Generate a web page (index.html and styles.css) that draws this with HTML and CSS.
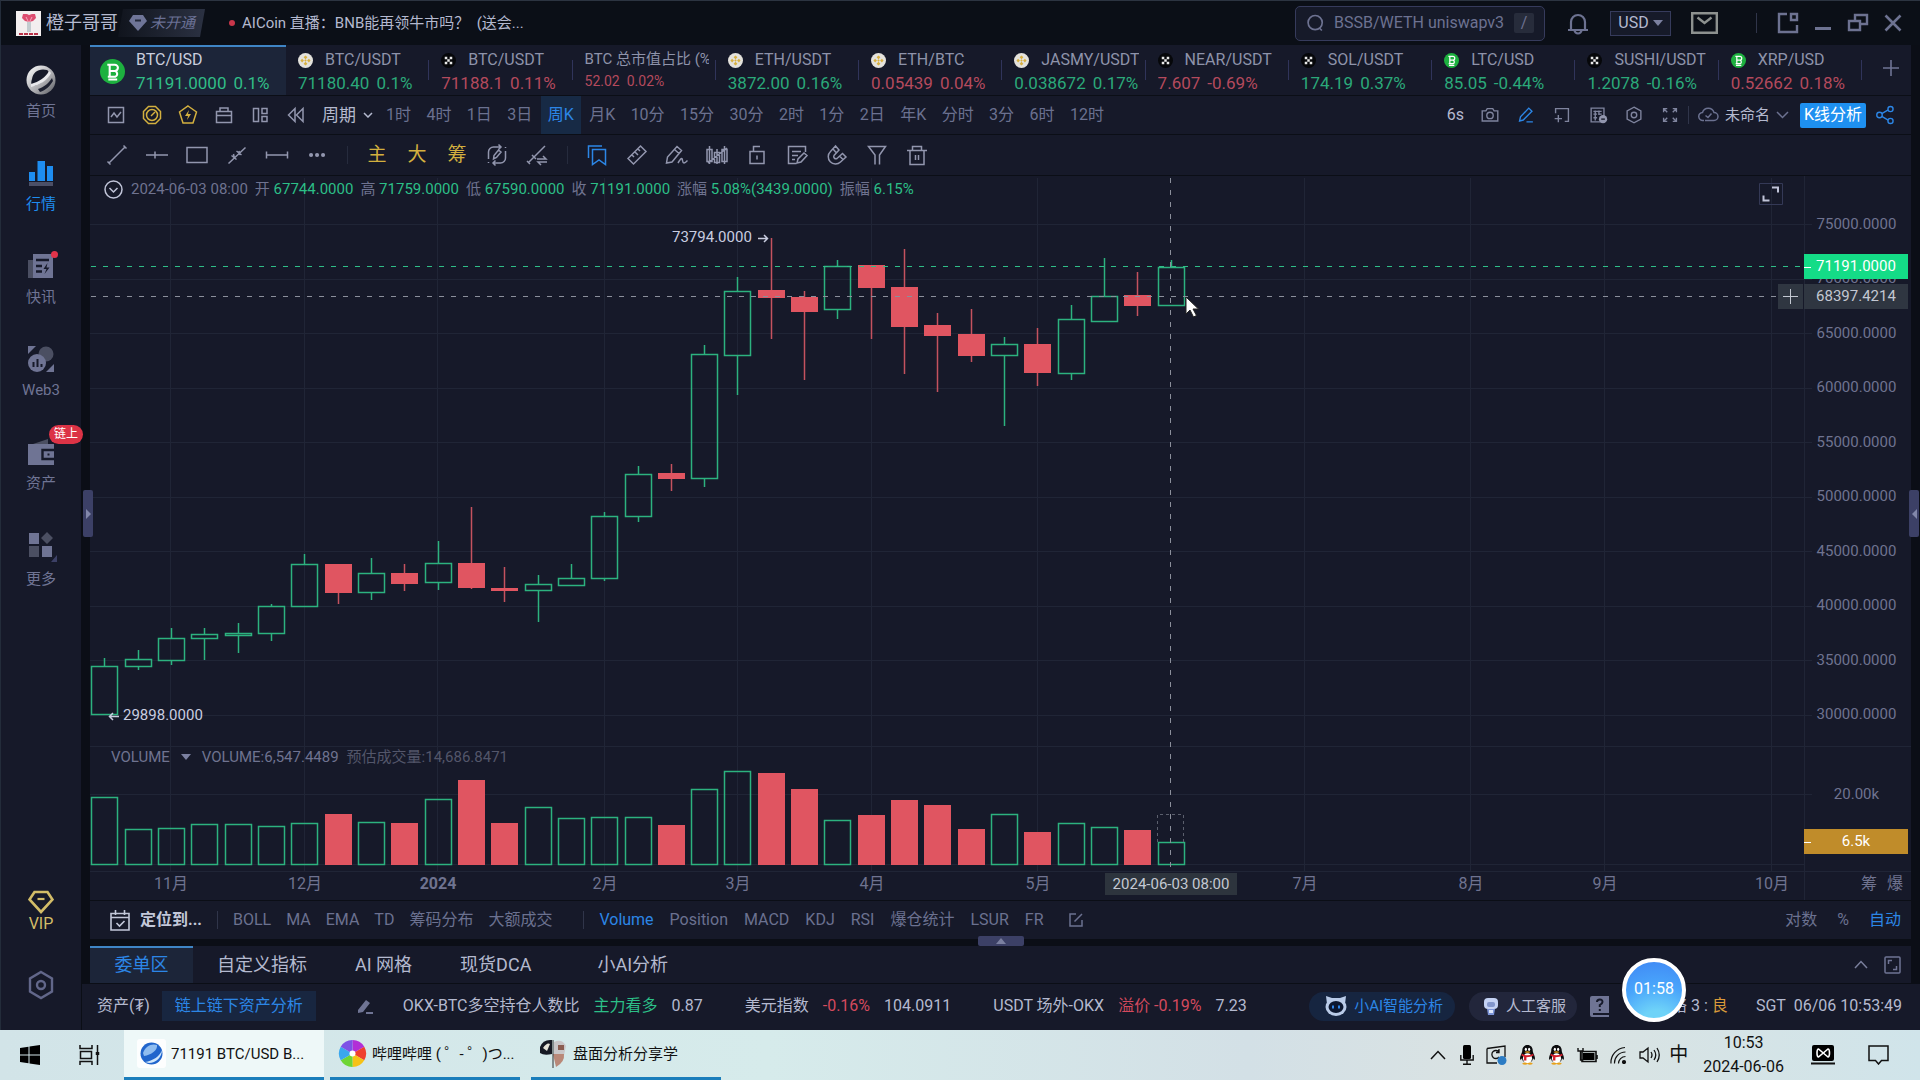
FILE: index.html
```html
<!DOCTYPE html>
<html lang="zh-CN">
<head>
<meta charset="utf-8">
<title>71191 BTC/USD</title>
<link rel="stylesheet" href="styles.css">
</head>
<body>
<svg class="defs" aria-hidden="true">
  <symbol id="c-bnb" viewBox="0 0 16 16"><circle cx="8" cy="8" r="8" fill="#e4e2dc"/><path d="M8 2.6 10 4.6 8 6.6 6 4.6zM8 9.4l2 2-2 2-2-2zM4.4 6 6.3 8 4.4 10 2.6 8zM11.6 6l1.800 2-1.800 2-1.900-2zM8 6.700 9.300 8 8 9.300 6.700 8z" fill="#d8b041"/></symbol>
  <symbol id="c-okx" viewBox="0 0 16 16"><circle cx="8" cy="8" r="8" fill="#06070a"/><path d="M4 4h2.700v2.700H4zM9.300 4H12v2.700H9.300zM6.700 6.700h2.600v2.600H6.700zM4 9.300h2.700V12H4zM9.300 9.300H12V12H9.300z" fill="#e8e8e8"/></symbol>
  <symbol id="c-btf" viewBox="0 0 24 24"><circle cx="12" cy="12" r="12" fill="#1db13f"/><path d="M7 5.500h7.200a3 3 0 0 1 0 6H9.300m0-6v11M9.300 11.500h5.300a3 3 0 0 1 0 5.600H7.500M8 19.600h8.500" fill="none" stroke="#fff" stroke-width="2"/></symbol>
  <symbol id="c-qq" viewBox="0 0 18 22"><path d="M9 0c3.600 0 5.800 2.600 5.800 6.400 0 1.200.4 2 1.200 3.800 1.200 2.600 1.600 5.600.8 5.900-.5.200-1.200-.8-1.700-1.600-.2 1.600-.8 2.800-1.700 3.600H4.600c-.9-.8-1.500-2-1.700-3.600-.5.800-1.200 1.800-1.700 1.600-.8-.3-.4-3.300.8-5.900C2.800 8.400 3.200 7.600 3.200 6.400 3.200 2.600 5.400 0 9 0z" fill="#0b0b0d"/><ellipse cx="9" cy="14.500" rx="5" ry="5.500" fill="#fff"/><ellipse cx="7.200" cy="4.800" rx="1.200" ry="1.700" fill="#fff"/><ellipse cx="10.800" cy="4.800" rx="1.200" ry="1.700" fill="#fff"/><path d="M5.500 7.600q3.500-1.300 7 0-3.500 2-7 0zM3 20.500q3-2.500 6-.3 3-2.200 6 .3-3 2-6 .5-3 1.500-6-.5z" fill="#e8a21c"/><path d="M2.800 9.500q6.200 3.600 12.400 0l.6 2q-3.500 2-8 2v3.500H5.200V13l-3-1.500z" fill="#d5202c"/></symbol>
</svg>

<div class="window">
  <header class="titlebar">
    <div class="user">
      <svg class="avatar" viewBox="0 0 25 25"><rect width="25" height="25" fill="#f3efef"/><path d="M7 3h4l2 1 3-1h3l1 4-3 3-4 1-4-1-3-3z" fill="#dd4c6f"/><path d="M10 6l3 6 3-6" stroke="#f3a9bb" fill="none"/><path d="M11 11h4v10h-4z" fill="#c3cbcf"/><path d="M3 23h19" stroke="#ba3349" stroke-width="2" stroke-dasharray="4 1"/></svg>
      <span class="user-name">橙子哥哥</span>
      <a class="member" href="#"><svg width="18" height="16" viewBox="0 0 18 16"><path d="M4 0h10l4 6-9 10L0 6z" fill="#6f7598"/><path d="M6 5.500h6" stroke="#23293b" stroke-width="2"/></svg><i>未开通</i></a>
    </div>
    <a class="notice" href="#"><span class="dot"></span>AICoin 直播：BNB能再领牛市吗？&nbsp; (送会...</a>
    <div class="title-tools">
      <label class="search"><svg class="i" viewBox="0 0 24 24"><circle cx="11" cy="11.500" r="8.500" stroke-width="2"/><path d="M16 18l3 3" stroke-width="2"/></svg><input type="text" aria-label="搜索" placeholder="BSSB/WETH uniswapv3"><kbd>/</kbd></label>
      <button class="tb bell" aria-label="通知"><svg class="i" viewBox="0 0 24 24"><path d="M2 19h20M5 18v-7a7 7 0 0 1 14 0v7M8.500 19a3.500 3.500 0 0 0 7 0" stroke-width="2.200"/></svg></button>
      <button class="currency">USD<span class="tri"></span></button>
      <button class="tb mail" aria-label="邮件"><svg width="27" height="22" viewBox="0 0 27 22" fill="none" stroke="currentColor" stroke-width="2.400"><path d="M1.200 1.200h24.600v19.600H1.200zM6.500 5.500l7 5.500 7-5.500"/></svg></button>
      <span class="bar"></span>
      <button class="tb" aria-label="布局"><svg class="i" viewBox="0 0 24 24"><path d="M11 3H3v18h18v-7M15 3h6v6h-6z" stroke-width="2.400"/></svg></button>
      <button class="tb" aria-label="最小化"><svg class="i" viewBox="0 0 24 24"><path d="M4 17.500h16" stroke-width="3"/></svg></button>
      <button class="tb" aria-label="还原"><svg class="i" viewBox="0 0 24 24"><path d="M3 10h11v9H3zM9 9V4h12v9h-6" stroke-width="2.400"/></svg></button>
      <button class="tb" aria-label="关闭"><svg class="i" viewBox="0 0 24 24"><path d="M4.500 4.500l15 15M19.500 4.500l-15 15" stroke-width="2.600"/></svg></button>
    </div>
  </header>

  <div class="body">
    <nav class="side">
      <a href="#"><svg width="30" height="30" viewBox="0 0 30 30"><defs><linearGradient id="mg" x1="0" y1="0" x2="1" y2="1"><stop offset="0" stop-color="#fff"/><stop offset=".6" stop-color="#a9a9ad"/><stop offset="1" stop-color="#55575d"/></linearGradient></defs><circle cx="15" cy="15" r="14.500" fill="url(#mg)"/><path d="M6 14C7 7 13 3 21 5c3 2 3 6-2 10-5 4-11 7-13 5-1-1-1-3 0-6z" fill="#161929"/><path d="M5 19c8-2 15-7 18-13l2 2C22 15 14 20 5 22z" fill="#e9e9ec"/><path d="M12 24c6-2 11-6 14-11l1 3c-3 5-7 9-13 11z" fill="#1d2030"/></svg><span>首页</span></a>
      <a class="on" href="#"><svg width="26" height="26" viewBox="0 0 26 26"><path d="M1 12h6v9H1zM9.500 1H17v20H9.500zM19 6h6v15h-6z" fill="#1e8df0"/><path d="M1 22h24v4H1z" fill="#4b4f66"/></svg><span>行情</span></a>
      <a href="#"><svg width="28" height="26" viewBox="0 0 28 26"><path d="M1 7h6v18H1z" fill="#4b4f62"/><path d="M6 1h20v24H6z" fill="#6f7494"/><path d="M9 7h13M9 13h6M9 18.500h6" stroke="#161929" stroke-width="2.400"/><path d="M20.500 10l-4 6h3l-2 5 5-6.500h-3z" fill="#161929"/></svg><em class="reddot"></em><span>快讯</span></a>
      <a href="#"><svg width="26" height="26" viewBox="0 0 26 26"><circle cx="18" cy="8" r="7.500" fill="#4b4f62"/><path d="M0 0h8L0 8zM26 26h-8l8-8z" fill="#6f7494"/><circle cx="9" cy="17" r="9" fill="#6f7494"/><path d="M5.500 21v-5M9.500 21v-8M13.500 21v-3" stroke="#161929" stroke-width="2"/></svg><span>Web3</span></a>
      <a href="#"><svg width="26" height="26" viewBox="0 0 26 26"><path d="M2 6l18-6v6z" fill="#4b4f62"/><path d="M0 5h26v21H0z" fill="#6f7494"/><path d="M26 11H14.500v9H26" fill="none" stroke="#161929" stroke-width="2.400"/><path d="M19.500 14.500h2v2h-2z" fill="#161929"/></svg><em class="badge">链上</em><span>资产</span></a>
      <a class="more" href="#"><svg width="32" height="30" viewBox="0 0 32 30"><path d="M4 1h10v11H4zM17 14h10v11H17z" fill="#6f7494"/><path d="M22 0l6 6-6 6-6-6zM4 14h10v11H4z" fill="#4b4f62"/><path d="M32 23v7h-6z" fill="#3c4066"/></svg><span>更多</span></a>
      <div class="side-foot">
        <a class="vip" href="#"><svg width="26" height="24" viewBox="0 0 26 24"><path d="M6.500 2h13l5 7.500L13 22 1.500 9.500z" fill="none" stroke="#d3bd68" stroke-width="2.600"/><path d="M9.500 9h7" stroke="#d3bd68" stroke-width="2.200"/></svg><span>VIP</span></a>
        <a href="#" aria-label="设置"><svg width="26" height="30" viewBox="0 0 26 30" fill="none" stroke="#62678a" stroke-width="2.400"><path d="M13 2l11 6.500v13L13 28 2 21.500v-13z"/><circle cx="13" cy="15" r="4"/></svg></a>
      </div>
    </nav>

    <main class="main">
      <nav class="tickers">
        <a class="tick active" href="#"><svg class="big"><use href="#c-btf"/></svg><span><b>BTC/USD</b><strong class="up"><span>71191.0000</span><span>0.1%</span></strong></span></a>
        <a class="tick" href="#"><b><svg><use href="#c-bnb"/></svg>BTC/USDT</b><strong class="up"><span>71180.40</span><span>0.1%</span></strong></a>
        <a class="tick" href="#"><b><svg><use href="#c-okx"/></svg>BTC/USDT</b><strong class="dn"><span>71188.1</span><span>0.11%</span></strong></a>
        <a class="tick small" href="#"><b>BTC 总市值占比 (%)</b><strong class="dn"><span>52.02</span><span>0.02%</span></strong></a>
        <a class="tick" href="#"><b><svg><use href="#c-bnb"/></svg>ETH/USDT</b><strong class="up"><span>3872.00</span><span>0.16%</span></strong></a>
        <a class="tick" href="#"><b><svg><use href="#c-bnb"/></svg>ETH/BTC</b><strong class="dn"><span>0.05439</span><span>0.04%</span></strong></a>
        <a class="tick" href="#"><b><svg><use href="#c-bnb"/></svg>JASMY/USDT</b><strong class="up"><span>0.038672</span><span>0.17%</span></strong></a>
        <a class="tick" href="#"><b><svg><use href="#c-okx"/></svg>NEAR/USDT</b><strong class="dn"><span>7.607</span><span>-0.69%</span></strong></a>
        <a class="tick" href="#"><b><svg><use href="#c-okx"/></svg>SOL/USDT</b><strong class="up"><span>174.19</span><span>0.37%</span></strong></a>
        <a class="tick" href="#"><b><svg><use href="#c-btf"/></svg>LTC/USD</b><strong class="up"><span>85.05</span><span>-0.44%</span></strong></a>
        <a class="tick" href="#"><b><svg><use href="#c-okx"/></svg>SUSHI/USDT</b><strong class="up"><span>1.2078</span><span>-0.16%</span></strong></a>
        <a class="tick" href="#"><b><svg><use href="#c-btf"/></svg>XRP/USD</b><strong class="dn"><span>0.52662</span><span>0.18%</span></strong></a>
        <button class="add" aria-label="添加"><svg width="16" height="16" viewBox="0 0 16 16"><path d="M8 0v16M0 8h16" stroke="#6f7494" stroke-width="1.600"/></svg></button>
      </nav>

      <div class="toolbar periods">
        <div class="tools-a">
          <button aria-label="指标"><svg class="i" viewBox="0 0 24 24"><path d="M4.500 4.500h15v15h-15zM7 14l3-4 3 4 4-5"/></svg></button>
          <button class="gold" aria-label="仪表"><svg class="i" viewBox="0 0 24 24"><path d="M8.500 3.500h7l5 5v7l-5 5h-7l-5-5v-7z"/><circle cx="12" cy="12" r="5.500"/><path d="M11 13l4-4"/></svg></button>
          <button class="gold" aria-label="闪电"><svg class="i" viewBox="0 0 24 24"><path d="M12 3l8.500 6-3.500 11H7L3.500 9z"/><path d="M13 7l-4 6h3l-1 4 4-6h-3z" fill="currentColor" stroke="none"/></svg></button>
          <button aria-label="日历"><svg class="i" viewBox="0 0 24 24"><path d="M4.500 8.500h15v11h-15zM4.500 12.500h15M8 8V5h8v3"/></svg></button>
          <button aria-label="布局"><svg class="i" viewBox="0 0 24 24"><path d="M5.500 5.500h5v13h-5zM14 5.500h5v5h-5zM14 13.500h5v5h-5z"/></svg></button>
          <button aria-label="回放"><svg class="i" viewBox="0 0 24 24"><path d="M11 5.500v13L4.500 12zM19 5.500v13L12.500 12z"/></svg></button>
        </div>
        <button class="cycle">周期<svg width="10" height="6" viewBox="0 0 10 6" fill="none" stroke="currentColor" stroke-width="1.500"><path d="M1 1l4 4 4-4"/></svg></button>
        <div class="frames">
          <button>1时</button><button>4时</button><button>1日</button><button>3日</button><button class="on">周K</button><button>月K</button><button>10分</button><button>15分</button><button>30分</button><button>2时</button><button>1分</button><button>2日</button><button>年K</button><button>分时</button><button>3分</button><button>6时</button><button>12时</button>
        </div>
        <div class="tools-b">
          <span class="sec">6s</span>
          <button aria-label="截图"><svg class="i" viewBox="0 0 24 24"><path d="M3.500 7.500h4l1.500-2.500h6l1.500 2.500h4v11h-17z"/><circle cx="12" cy="12.500" r="3.500"/></svg></button>
          <button class="blue" aria-label="画笔"><svg class="i" viewBox="0 0 24 24"><path d="M5 18.500l1-4.500L15 4.500l3.500 3.500L9 17.500zM12.500 19.500h7"/></svg></button>
          <button aria-label="添加"><svg class="i" viewBox="0 0 24 24"><path d="M5 10V5h14v14h-4M4 16h8M8 12v8"/></svg></button>
          <button aria-label="公式"><svg class="i" viewBox="0 0 24 24"><path d="M4.500 4.500h14v15h-14zM7 8h9M7 11h4M13 11h3M7 15h4M9 7v11M13 7v5"/><circle cx="17.500" cy="16.500" r="4.500" fill="#9296ae" stroke="none"/><path d="M15.500 16.500h4" stroke="#161929"/></svg></button>
          <button aria-label="设置"><svg class="i" viewBox="0 0 24 24"><path d="M12 3.500l7.500 4v9l-7.500 4-7.500-4v-9z"/><circle cx="12" cy="12" r="3"/></svg></button>
          <button aria-label="全屏"><svg class="i" viewBox="0 0 24 24"><path d="M5 9V5h4M5 5l4 4M15 5h4v4M19 5l-4 4M5 15v4h4M5 19l4-4M19 15v4h-4M19 19l-4-4"/></svg></button>
          <span class="bar"></span>
          <button class="named"><svg width="21" height="18" viewBox="0 0 21 18" fill="none" stroke="#6b7190" stroke-width="1.500"><path d="M6 14.500H5a4 4 0 0 1-.5-8 6 6 0 0 1 11.500 0 4 4 0 0 1 0 8H7M7.500 9.500l2.500 2 3.500-4"/></svg>未命名<svg width="13" height="8" viewBox="0 0 13 8" fill="none" stroke="#6b7190" stroke-width="1.500"><path d="M1 1l5.500 5.500L12 1"/></svg></button>
          <button class="kline">K线分析</button>
          <button class="blue share" aria-label="分享"><svg class="i" viewBox="0 0 24 24"><circle cx="6" cy="12" r="3"/><circle cx="18" cy="5.500" r="2.800"/><circle cx="18" cy="18.500" r="2.800"/><path d="M8.500 10.500l7-4M8.500 13.500l7 4"/></svg></button>
        </div>
      </div>

      <div class="toolbar draw">
        <button aria-label="线段"><svg class="i" viewBox="0 0 24 24"><path d="M4 20L20 4M2.500 18.500l3 3M18.500 2.500l3 3"/></svg></button>
        <button aria-label="水平线"><svg class="i" viewBox="0 0 24 24"><path d="M1 12h22M10 8.500v7"/></svg></button>
        <button aria-label="矩形"><svg class="i" viewBox="0 0 24 24"><path d="M2 4.500h20v15H2z"/></svg></button>
        <button aria-label="箭头"><svg class="i" viewBox="0 0 24 24"><path d="M3.500 20.500l17-16M6.500 12.500l5 4M11.500 8l5 4M8.500 11l1 5M14 8l1 4"/></svg></button>
        <button aria-label="区间"><svg class="i" viewBox="0 0 24 24"><path d="M1 12h22M1.500 8.500v7M22.500 8.500v7"/></svg></button>
        <button aria-label="更多"><svg class="i" viewBox="0 0 24 24"><path d="M6 12h.1M12 12h.1M18 12h.1" stroke-width="4" stroke-linecap="round"/></svg></button>
        <span class="bar"></span>
        <button class="gold ch">主</button><button class="gold ch">大</button><button class="gold ch">筹</button>
        <button aria-label="同步画线"><svg class="i" viewBox="0 0 24 24"><path d="M3.500 16V9a5 5 0 0 1 5-5H16M13.500 1.500L16 4l-2.500 2.500M20.500 8v7a5 5 0 0 1-5 5H8M10.500 17.500L8 20l2.500 2.500M8.500 16l.5-3.500L13.500 7l2.500 2-4.500 5.500zM20.500 4v1M3.500 19v1"/></svg></button>
        <button aria-label="切换画线"><svg class="i" viewBox="0 0 24 24"><path d="M3 20L20 3M7 12l4 4M2 18l3 3M12 16h9l-3-3M22 19h-9l3 3"/></svg></button>
        <span class="bar"></span>
        <button class="blue" aria-label="书签"><svg class="i" viewBox="0 0 24 24"><path d="M7.500 6.500h13v15L14 17l-6.500 4.500zM3.500 15V3H17"/></svg></button>
        <button aria-label="尺"><svg class="i" viewBox="0 0 24 24"><path d="M3 15.500L15.500 3 21 8.500 8.500 21zM7 12l2 2M10 9l3 3M13 6l2 2"/></svg></button>
        <button aria-label="画笔"><svg class="i" viewBox="0 0 24 24"><path d="M1.500 20l1-6L12 3.500 16.500 7.500 7 19zM9.500 6.500l4.500 4M13 20c3-5 4-6 4.500-2.500s2 3 5 0"/></svg></button>
        <button aria-label="形态"><svg class="i" viewBox="0 0 24 24"><path d="M2 6.500h5v12H2zM9.500 9.500h5v10h-5zM17 6.500h5v12h-5zM4.500 3v18M12 6v15M19.500 3v18M3 20L22 5"/></svg></button>
        <button aria-label="锁定"><svg class="i" viewBox="0 0 24 24"><path d="M5 8.500h14v12H5zM8.500 8V3.500H15M12 12.500v4"/></svg></button>
        <button aria-label="备注"><svg class="i" viewBox="0 0 24 24"><path d="M20.500 9V3.500h-17v17h8M7 8.500h9M7 12.500h6M7 16.500h3M12 20l1-4 6-6 3 2.500-6 6.500z"/></svg></button>
        <button aria-label="磁吸"><svg class="i" viewBox="0 0 24 24"><path d="M10.500 3L5.500 8.500a7 7 0 0 0 10 10.500l5.500-5-3.500-3.500-5.500 5a2.200 2.200 0 0 1-3-3L14 7zM8 6l3.500 4M14.500 13l3.500 3.500"/></svg></button>
        <button aria-label="筛选"><svg class="i" viewBox="0 0 24 24"><path d="M10 21.500V12L3.500 3.500h17L14.500 12v9.500"/></svg></button>
        <button aria-label="删除"><svg class="i" viewBox="0 0 24 24"><path d="M2 7.500h20M5 8v13.500h14V8M7.500 7V3.500h9V7M10.500 12v5M13.500 12v5"/></svg></button>
      </div>

      <section class="chart">
        <svg class="plot" id="plot" role="img" aria-label="K线图"></svg>
        <div class="axis">
          <div class="prices"><span>75000.0000</span><span>70000.0000</span><span>65000.0000</span><span>60000.0000</span><span>55000.0000</span><span>50000.0000</span><span>45000.0000</span><span>40000.0000</span><span>35000.0000</span><span>30000.0000</span></div>
          <span class="vol">20.00k</span>
          <span class="dist"><span>筹</span><span>爆</span></span>
          <span class="tag tag-last">71191.0000</span>
          <button class="tag-plus" aria-label="添加提醒"><svg width="15" height="15" viewBox="0 0 15 15"><path d="M7.500 0v15M0 7.500h15" stroke="#c3c8d2"/></svg></button>
          <span class="tag tag-cross">68397.4214</span>
          <span class="tag tag-vol">6.5k</span>
        </div>
        <div class="ohlc"><svg width="19" height="19" viewBox="0 0 19 19" fill="none" stroke="#c0c4d8" stroke-width="1.500"><circle cx="9.500" cy="9.500" r="8.500"/><path d="M5.500 8l4 4 4-4"/></svg><span>2024-06-03 08:00</span><span>开 <b>67744.0000</b></span><span>高 <b>71759.0000</b></span><span>低 <b>67590.0000</b></span><span>收 <b>71191.0000</b></span><span>涨幅 <b>5.08%(3439.0000)</b></span><span>振幅 <b>6.15%</b></span></div>
        <div class="volhead"><button>VOLUME<span class="tri"></span></button><span>VOLUME:6,547.4489</span><span class="dim">预估成交量:14,686.8471</span></div>
        <button class="expand" aria-label="放大"><svg width="24" height="22" viewBox="0 0 24 22" fill="none"><path d="M.5.5h23v21H.5z" stroke="#343956"/><path d="M13 4.500h6v5M4.500 12.500v5h6" stroke="#c0c4d8" stroke-width="2"/></svg></button>
      </section>

      <div class="toolbar inds">
        <button class="locate"><svg width="20" height="21" viewBox="0 0 20 21" fill="none" stroke="currentColor" stroke-width="1.600"><path d="M1 3.500h18v16.500H1zM1 7.500h18M5.500 0v5M14.500 0v5M6.500 13l3 3 5-5"/></svg>定位到...</button>
        <span class="bar"></span>
        <button>BOLL</button><button>MA</button><button>EMA</button><button>TD</button><button>筹码分布</button><button>大额成交</button>
        <span class="bar wide"></span>
        <div class="subs"><button class="blue">Volume</button><button>Position</button><button>MACD</button><button>KDJ</button><button>RSI</button><button>爆仓统计</button><button>LSUR</button><button>FR</button></div>
        <button class="edit" aria-label="编辑"><svg width="14" height="14" viewBox="0 0 14 14" fill="none" stroke="currentColor" stroke-width="1.500"><path d="M7 1H1v12h12V7M5.500 8.500L13 1"/></svg></button>
        <div class="scale"><button>对数</button><button>%</button><button class="blue">自动</button></div>
        <button class="fold" aria-label="展开面板"><span class="tri up-tri"></span></button>
      </div>

      <nav class="panel-tabs">
        <a class="on" href="#">委单区</a><a href="#">自定义指标</a><a href="#">AI 网格</a><a href="#">现货DCA</a><a class="last" href="#">小AI分析</a>
        <span class="panel-tools"><button aria-label="收起"><svg width="14" height="9" viewBox="0 0 14 9" fill="none" stroke="#7a7f9c" stroke-width="1.500"><path d="M1 8l6-6.500L13 8"/></svg></button><button aria-label="全屏"><svg width="17" height="18" viewBox="0 0 17 18" fill="none" stroke="#6f7494" stroke-width="1.500"><rect x="1" y="1" width="15" height="16" rx="1"/><path d="M4.500 8V4.500H8M12.500 10v3.500H9"/></svg></button></span>
      </nav>
    </main>
    <button class="handle left" aria-label="展开左栏"><span></span></button>
    <button class="handle right" aria-label="展开右栏"><span></span></button>
    <footer class="status">
      <span>资产(₮)</span>
      <button class="chain">链上链下资产分析</button>
      <button class="pen" aria-label="编辑"><svg width="16" height="15" viewBox="0 0 16 15" fill="#6f7494"><path d="M1 14V11l8-10 4 3-7 9zM9 13h7v2H9z"/></svg></button>
      <span class="q"><span>OKX-BTC多空持仓人数比</span><span class="g">主力看多</span><span>0.87</span></span>
      <span class="q"><span>美元指数</span><span class="r">-0.16%</span><span>104.0911</span></span>
      <span class="q"><span>USDT 场外-OKX</span><span class="r">溢价 -0.19%</span><span>7.23</span></span>
      <div class="status-end">
        <button class="pill ai"><svg width="22" height="20" viewBox="0 0 22 20"><path d="M1 0l6 2h8l6-2-1 8H2z" fill="#b9cbe8"/><ellipse cx="11" cy="11" rx="10.500" ry="9" fill="#b9cbe8"/><ellipse cx="11" cy="11" rx="7.500" ry="6" fill="#0c1730"/><path d="M8 9.500v3M14 9.500v3" stroke="#2f86e8" stroke-width="2"/></svg>小AI智能分析</button>
        <button class="pill cs"><svg width="16" height="18" viewBox="0 0 16 18"><rect x="1" y="1" width="14" height="11" rx="4" fill="#c4d2f4"/><rect x="4" y="5" width="8" height="5" rx="2" fill="#8296cc"/><path d="M4 12h8l-1 6H5z" fill="#7d95d8"/><path d="M6 13h4v3H6z" fill="#dfe7fa"/></svg>人工客服</button>
        <button class="book" aria-label="帮助"><svg width="19" height="21" viewBox="0 0 19 21"><path d="M2 0h17v17H3v2h16v2H2a2 2 0 0 1-2-2V2a2 2 0 0 1 2-2z" fill="#6f7494"/><path d="M7 6q0-2.500 2.800-2.500T12.500 6q0 1.500-2.700 3v2M9.800 13v2" fill="none" stroke="#161929" stroke-width="2"/></svg></button>
        <span class="net">网络 3 : <b>良</b></span>
        <span class="clock">SGT&nbsp; 06/06 10:53:49</span>
      </div>
      <div class="timer">01:58</div>
    </footer>
  </div>
</div>

<footer class="taskbar">
  <button class="tk start" aria-label="开始"><svg width="20" height="20" viewBox="0 0 20 20"><path d="M0 3l8.500-1.200v7.700H0zM9.500 1.600L20 0v9.500H9.500zM0 10.500h8.500v7.700L0 17zM9.500 10.500H20V20L9.500 18.400z"/></svg></button>
  <button class="tk view" aria-label="任务视图"><svg width="21" height="20" viewBox="0 0 21 20" fill="none" stroke="#111" stroke-width="1.500"><path d="M1 0v3.500h12V0M1 20v-3.500h12V20M1.500 6.500h11v7h-11zM18.500 0v20"/><path d="M18.500 7v3" stroke-width="3.500"/></svg></button>
  <a class="task on" href="#"><svg width="29" height="29" viewBox="0 0 29 29"><rect width="29" height="29" rx="3" fill="#fdfefe"/><circle cx="14.500" cy="14.500" r="11" fill="#2065cc"/><path d="M6 14C8 7 15 4 20 6c1 5-6 10-13 11z" fill="#8fbdf0"/><path d="M8 23c8-1 15-6 17-12 0 7-6 13-13 13z" fill="#cfe6fb"/></svg>71191 BTC/USD B...</a>
  <a class="task" href="#"><svg width="29" height="29" viewBox="0 0 29 29"><g stroke-width="11" fill="none"><path d="M14.500 6.500A8 8 0 0 1 21.500 10.500" stroke="#b22fd6"/><path d="M21.500 10.500a8 8 0 0 1 0 8" stroke="#ef3f2e"/><path d="M21.500 18.500a8 8 0 0 1-7 4" stroke="#f6c216"/><path d="M14.500 22.500a8 8 0 0 1-7-4" stroke="#6fd534"/><path d="M7.500 18.500a8 8 0 0 1 0-8" stroke="#3aa7ee"/><path d="M7.500 10.500a8 8 0 0 1 7-4" stroke="#7d52e6"/></g><circle cx="14.500" cy="14.500" r="3" fill="#fff"/></svg>哔哩哔哩 ( ゜- ゜)つ...</a>
  <a class="task" href="#"><svg width="29" height="29" viewBox="0 0 29 29"><path d="M1 8q3-8 12-7v14q-8 2-12-1z" fill="#171a24"/><path d="M4 9q4-6 7-4l-3 7z" fill="#e6e3d8"/><path d="M15 3q8-4 12 4l-2 9H15z" fill="#c9c6c8"/><path d="M19 6h6v5h-6z" fill="#8a5c50"/><path d="M14 15h11q1 8-8 13z" fill="#b98878"/><path d="M14 1v28" stroke="#333"/></svg>盘面分析分享学</a>
  <div class="tray">
    <button class="t" aria-label="更多图标"><svg width="16" height="10" viewBox="0 0 16 10" fill="none" stroke="#111" stroke-width="1.500"><path d="M1 9l7-7.500L15 9"/></svg></button>
    <svg width="14" height="20" viewBox="0 0 14 20"><rect x="3" y="0" width="8" height="14" rx="1.500"/><path d="M.8 10v5h12.400v-5M7 15v4M3 19.300h8" fill="none" stroke="#111" stroke-width="1.400"/></svg>
    <svg width="21" height="20" viewBox="0 0 21 20" fill="none" stroke="#111" stroke-width="1.300"><path d="M1 3.500L19 1v11M1 3.500V18h10M13 7a4 4 0 1 0 0 5M13 4v3.500h-3"/><circle cx="16" cy="15.500" r="4.500" fill="#2c7cc4" stroke="none"/></svg>
    <svg width="17" height="20"><use href="#c-qq"/></svg>
    <svg width="17" height="20"><use href="#c-qq"/></svg>
    <svg width="21" height="15" viewBox="0 0 21 15"><path d="M5 3.500h14v10H5zM20 7v4" fill="none" stroke="#111" stroke-width="1.600"/><path d="M6 5h11.500v7H6z"/><path d="M1 0v3h5V0M3.500 3v9h3" fill="none" stroke="#111" stroke-width="1.400"/></svg>
    <svg width="17" height="18" viewBox="0 0 17 18" fill="none" stroke="#111" stroke-width="1.200"><path d="M1 17.500A15 15 0 0 1 15 1.500M4.500 17.500A11 11 0 0 1 15.500 6M8.500 17.500A7 7 0 0 1 15.500 10.500"/><circle cx="14" cy="16" r="1.500" fill="#111"/></svg>
    <svg width="21" height="18" viewBox="0 0 21 18" fill="none" stroke="#111" stroke-width="1.300"><path d="M1 6h3l5-4v14l-5-4H1zM12 6q2 3 0 6M15 4q3.500 5 0 10M18 2q4.500 7 0 14"/></svg>
    <span class="ime">中</span>
    <span class="now"><span>10:53</span><span>2024-06-06</span></span>
    <svg class="app" width="24" height="20" viewBox="0 0 24 20"><rect x="1" width="22" height="16" rx="2"/><path d="M17 12L7.500 4Q6 4 6 8t1.500 4L17 4q1.500 0 1.500 4T17 12z" fill="none" stroke="#fff" stroke-width="1.600"/><path d="M0 18.500h24" stroke="#111" stroke-width="2"/></svg>
    <svg class="msg" width="21" height="20" viewBox="0 0 21 20" fill="none" stroke="#111" stroke-width="1.500"><path d="M1 1h19v14.500h-6.500L10.500 19l-3-3.500H1z"/></svg>
  </div>
</footer>
<script src="chart.js"></script>
</body>
</html>
```
FILE: styles.css
```css
* { box-sizing: border-box; }
body {
  margin: 0;
  min-height: 100vh;
  display: flex;
  flex-direction: column;
  background: #0b0e16;
  color: #b4b9cf;
  font: 16px/20px Roboto, "Noto Sans CJK SC", sans-serif;
  overflow: hidden;
}
a { color: inherit; text-decoration: none; }
button { margin: 0; padding: 0; border: 0; background: none; color: inherit; font: inherit; white-space: nowrap; }
i, em { font-style: normal; }
.defs { display: none; }
.i { width: 24px; height: 24px; fill: none; stroke: currentColor; stroke-width: 1.5; flex: none; }
.bar { width: 1px; height: 18px; background: #30354a; flex: none; }
.tri { border: 5px solid transparent; border-top: 6px solid #7b80a0; border-bottom: 0; }
.up-tri { border-top: 0; border-bottom: 6px solid #7b80a0; }
.blue { color: #2c86e6; }
.gold { color: #d3b03f; }
.window { flex: 1; display: flex; flex-direction: column; border-top: 1px solid #2c3441; border-left: 1px solid #232c3a; }

/* title bar */
.titlebar { height: 44px; display: flex; align-items: center; padding: 0 10px 0 15px; background: #0b0f17; }
.user { display: flex; align-items: center; }
.avatar { width: 25px; height: 25px; margin-right: 5px; }
.user-name { font-size: 18px; }
.member { display: flex; align-items: center; gap: 3px; height: 28px; padding: 0 10px 0 11px; background: linear-gradient(90deg, #10141d, #2b3142); clip-path: polygon(5px 0, 100% 0, 82px 100%, 0 100%); color: #6a7094; }
.member i { font-style: italic; font-size: 15px; }
.notice { display: flex; align-items: center; gap: 7px; margin-left: 24px; font-size: 15px; }
.dot { width: 6px; height: 6px; border-radius: 3px; background: #c9364a; }
.title-tools { margin-left: auto; display: flex; align-items: center; color: #6d7291; }
.search { display: flex; align-items: center; gap: 8px; width: 250px; height: 35px; padding: 0 10px; border: 1px solid #363b5c; border-radius: 5px; background: #161a29; }
.search .i { width: 20px; height: 20px; }
.search input { flex: 1; min-width: 0; padding: 0; border: 0; outline: 0; background: none; color: #6d7291; font: inherit; }
.search input::placeholder { color: #6d7291; }
.search kbd { width: 20px; height: 20px; border-radius: 2px; background: #272c3b; font: inherit; text-align: center; }
.tb { width: 35px; height: 35px; display: flex; align-items: center; justify-content: center; }
.bell { margin: 0 15px; }
.currency { display: flex; align-items: center; gap: 4px; width: 61px; height: 25px; justify-content: center; border: 1px solid #363b5c; background: #161a29; color: #b4b9cf; }
.mail { margin: 0 34px 0 16px; color: #8d918f; }
.title-tools .bar { height: 20px; margin-right: 13px; }

/* left navigation */
.body { flex: 1; position: relative; display: grid; grid-template-columns: 80px 1fr; grid-template-rows: 1fr 46px; column-gap: 9px; padding-right: 9px; }
.side { grid-row: 1 / 3; display: flex; flex-direction: column; background: #161929; font-size: 15px; color: #6f7494; padding-top: 20px; }
.side a { position: relative; height: 93px; display: flex; flex-direction: column; align-items: center; }
.side a > svg { flex: none; }
.side a span { margin-top: auto; margin-bottom: 37px; line-height: 20px; }
.side .on { color: #1e8df0; }
.side a:nth-child(n+2) > svg { margin-top: 2px; }
.side .more { height: 96px; }
.reddot { position: absolute; top: 0; right: 23px; width: 7px; height: 7px; border-radius: 4px; background: #e2334a; }
.badge { position: absolute; top: -12px; left: 48px; z-index: 2; height: 19px; padding: 0 5px; border-radius: 10px; background: #dc3346; color: #fff; font-size: 12px; line-height: 18px; white-space: nowrap; }
.side-foot { margin-top: auto; padding-bottom: 30px; display: flex; flex-direction: column; gap: 34px; }
.side-foot a { height: auto; }
.side-foot a span { margin: 0; }
.side .vip { color: #d3bd68; font-size: 16px; }

/* market tabs */
.main { display: flex; flex-direction: column; min-width: 0; background: #161929; }
.tickers { display: flex; height: 51px; border-bottom: 1px solid #0b0e16; }
.tick { flex: 1 1 0; min-width: 0; overflow: hidden; display: flex; flex-direction: column; justify-content: center; gap: 3px; padding: 3px 0 0 12px; white-space: nowrap; background: linear-gradient(#30345a, #30345a) no-repeat right 15px / 1px 20px; }
.tick b, .tick strong { font-weight: 400; display: flex; align-items: center; overflow: hidden; margin-right: 7px; line-height: 20px; }
.tick b { color: #8e93aa; }
.tick b svg { width: 15px; height: 15px; margin-right: 12px; flex: none; }
.tick strong { font-size: 17px; gap: 7px; }
.tick .up { color: #2ba97a; }
.tick .dn { color: #b44a5d; }
.tick.active { flex: 0 0 196px; flex-direction: row; align-items: center; justify-content: flex-start; gap: 11px; padding: 0 0 0 10px; border-top: 2px solid #3f85c5; background: #1c2539; }
.tick.active > span { display: flex; flex-direction: column; gap: 3px; }
.tick.active b { color: #c9cede; }
.tick.active b, .tick.active strong { margin: 0; }
.tick.active .up { color: #31bd87; }
.tick .big { width: 25px; height: 25px; flex: none; }
.tick.small { gap: 2px; padding-top: 0; }
.tick.small b { font-size: 15px; }
.tick.small strong { font-size: 14px; }
.add { width: 49px; padding-left: 10px; }

/* toolbars */
.toolbar { display: flex; align-items: center; border-bottom: 1px solid #0b0e16; color: #9296ae; }
.periods { height: 39px; }
.tools-a { display: flex; padding-left: 8px; }
.tools-a button { width: 36px; height: 24px; text-align: center; }
.tools-a .i, .draw .i { vertical-align: top; }
.cycle { margin-left: 8px; display: flex; align-items: center; gap: 7px; font-size: 17px; color: #b4b9cf; }
.frames { flex: 0 1 732px; min-width: 0; align-self: stretch; margin-left: 6px; display: flex; justify-content: space-between; color: #6b7190; }
.frames button { padding: 0 7px; }
.frames .on { background: #172a45; color: #2c86e6; }
.tools-b { margin-left: auto; display: flex; align-items: center; padding-right: 14px; color: #7f849e; }
.tools-b button { flex: none; }
.tools-b > button { width: 36px; height: 24px; text-align: center; }
.tools-b .i { vertical-align: top; width: 22px; height: 24px; }
.tools-b .blue { color: #2c86e6; }
.sec { margin-right: 8px; color: #b4b9cf; }
.tools-b .named { width: auto; margin: 0 11px 0 9px; display: flex; align-items: center; gap: 6px; font-size: 15px; color: #b4b9cf; }
.tools-b .kline { width: 66px; height: 25px; border-radius: 2px; background: #1e90f0; color: #fff; }
.tools-b .share { width: 24px; margin-left: 7px; }
.draw { height: 41px; padding-left: 7px; }
.draw button { width: 40px; height: 24px; flex: none; }
.draw .bar { margin: 0 9px 0 10px; background: #262b3d; }
.draw .ch { font-size: 19px; line-height: 24px; }

/* chart */
.chart { flex: 1 1 724px; position: relative; display: grid; grid-template-columns: 1fr 107px; font-size: 15px; color: #6f7390; }
.plot { width: 100%; height: 724px; overflow: visible; }
.grid { stroke: #202536; stroke-width: 1; }
.up-body { fill: none; stroke: #2cb27f; stroke-width: 1.5; }
.up-wick { stroke: #2cb27f; stroke-width: 1.5; }
.dn-body { fill: #e05561; }
.dn-wick { stroke: #c4525f; stroke-width: 1.5; }
.est { fill: none; stroke: #5b5f6d; stroke-dasharray: 3 3; }
.last-line { stroke: #2fbd87; stroke-dasharray: 5 7; }
.cross { stroke: #8b8f9b; stroke-dasharray: 5 7; }
.month { fill: #6f7390; text-anchor: middle; font-size: 16px; }
.year { font-weight: 700; }
.mark { fill: #c9cde0; }
.mark-line { fill: none; stroke: #c9cde0; stroke-width: 1.5; }
.date-box { fill: #2d343d; }
.date-text { fill: #c3c8d2; text-anchor: middle; }
.axis { position: relative; border-left: 1px solid #202536; display: flex; flex-direction: column; }
.prices { height: 548px; padding-top: 38px; display: flex; flex-direction: column; justify-content: space-between; text-align: center; padding-right: 3px; }
.vol { margin-top: 60px; text-align: center; padding-right: 3px; }
.dist { margin-top: auto; padding: 0 8px 6px 0; display: flex; justify-content: flex-end; gap: 10px; font-size: 16px; }
.tag { position: absolute; left: -1px; right: 3px; height: 25px; line-height: 25px; text-align: center; color: #fff; }
.tag-last { top: 78px; background: #14dc87; }
.tag-cross { top: 108px; background: #2f3641; color: #c3c8d2; }
.tag-plus { position: absolute; top: 108px; left: -27px; width: 25px; height: 25px; background: #2f3641; }
.tag-plus svg { display: block; margin: 0 auto; }
.tag-vol { top: 653px; background: #c08c2a; }
.tag-last::before, .tag-vol::before { content: ""; position: absolute; left: 0; top: 13px; width: 7px; height: 1px; background: #fff; }
.ohlc { position: absolute; top: 3px; left: 14px; display: flex; align-items: center; gap: 7px; }
.ohlc svg { margin-right: 1px; }
.ohlc b { font-weight: 400; color: #2cbf87; }
.volhead { position: absolute; top: 571px; left: 21px; display: flex; gap: 8px; }
.volhead button { display: flex; align-items: center; gap: 11px; margin-right: 3px; }
.dim { color: #53566a; }
.expand { position: absolute; top: 7px; right: 128px; height: 22px; }
.expand svg { display: block; }

/* indicators and panel */
.inds { position: relative; height: 39px; padding: 0 10px 0 20px; gap: 15px; border-top: 1px solid #0b0e16; border-bottom: 0; color: #6b7190; }
.inds .blue { color: #2c86e6; }
.inds .locate { display: flex; align-items: center; gap: 10px; color: #c3c8da; font-weight: 700; }
.inds .wide { margin-left: 16px; }
.subs { display: flex; gap: 16px; }
.inds .edit { height: 14px; margin-left: 10px; }
.edit svg { display: block; }
.scale { margin-left: auto; display: flex; gap: 20px; }
.fold { position: absolute; left: 888px; bottom: -7px; width: 46px; height: 10px; border-radius: 2px; background: #3c4066; display: flex; align-items: center; justify-content: center; }
.panel-tabs { height: 45px; border-top: 7px solid #0b0e16; border-bottom: 1px solid #0b0e16; display: flex; align-items: center; gap: 48px; font-size: 18px; color: #b4b9cf; }
.panel-tabs .on { align-self: stretch; width: 103px; margin-right: -24px; border-top: 2px solid #3f85c5; background: #1c2539; color: #2c86e6; text-align: center; line-height: 34px; }
.panel-tabs .last { margin-left: 18px; }
.panel-tools { margin-left: auto; padding-right: 10px; display: flex; align-items: center; gap: 16px; }
.panel-tools svg { display: block; }
.handle { position: absolute; top: 445px; width: 10px; height: 47px; border-radius: 2px; background: #3c4066; display: flex; align-items: center; justify-content: center; }
.handle span { border: 5px solid transparent; }
.handle.left { left: 82px; }
.handle.right { right: 1px; }
.handle.left span { border-left-color: #8287aa; border-right: 0; }
.handle.right span { border-right-color: #8287aa; border-left: 0; }

/* status line */
.status { position: relative; grid-column: 2; margin: 0 -9px 0 -8px; padding: 0 18px 2px 15px; display: flex; align-items: center; background: #161929; white-space: nowrap; }
.chain { height: 30px; margin-left: 12px; padding: 0 13px; background: #182640; color: #2c86e6; }
.pen { margin: 0 30px 0 41px; height: 15px; }
.pen svg { display: block; }
.q { display: flex; gap: 14px; margin-right: 42px; }
.g { color: #2cbf87; }
.r { color: #d44a5e; }
.status-end { margin-left: auto; display: flex; align-items: center; }
.pill { height: 29px; border-radius: 15px; display: flex; align-items: center; gap: 7px; font-size: 15px; }
.ai { padding: 0 12px 0 16px; background: #162540; color: #2c86e6; margin-right: 14px; }
.cs { padding: 0 11px 0 14px; background: #22263b; margin-right: 13px; }
.book { height: 21px; }
.book svg { display: block; }
.net { margin: 0 28px 0 46px; }
.net b { font-weight: 400; color: #d99a3a; }
.timer { position: absolute; right: 234px; top: -26px; width: 64px; height: 64px; border: 4px solid #fff; border-radius: 50%; background: radial-gradient(circle at 55% 120%, #6fd3f8 25%, #49a5fb 60%, #3f86f4); color: #fff; text-align: center; line-height: 54px; }

/* taskbar */
.taskbar { flex: none; height: 50px; display: flex; align-items: center; background: linear-gradient(90deg, #d2e4e8, #d6ebeb 40%, #d3e0e6 65%, #dbe3e2 80%, #d0e4ea); color: #111; font-size: 15px; }
.tk { height: 20px; }
.start { margin: 0 39px 0 20px; }
.view { margin-right: 24px; }
.task { flex: none; width: 190px; height: 50px; margin-right: 11px; padding-left: 8px; display: flex; align-items: center; gap: 5px; border-bottom: 3px solid #1b7ebb; white-space: nowrap; }
.task.on { width: 200px; margin-right: 6px; padding-left: 13px; background: #eef8f8; }
.tray { margin-left: auto; padding-right: 31px; display: flex; align-items: center; gap: 12px; }
.t { height: 10px; margin-right: 2px; }
.t svg { display: block; }
.ime { font-size: 19px; margin-left: -3px; }
.now { display: flex; flex-direction: column; gap: 4px; align-items: center; font-size: 16px; margin-left: 3px; }
.app { margin-left: 15px; }
.msg { margin-left: 21px; }
```
FILE: chart.js
```js
// One row per week: direction, high, body top, body bottom, low, volume top (window rows).
const weeks = [
  ["u", 658, 666, 714, 714, 797], ["u", 650, 659, 666, 670, 829], ["u", 628, 638, 660, 665, 828],
  ["u", 628, 634, 638, 660, 824], ["u", 623, 633, 635, 653, 824], ["u", 604, 606, 633, 641, 826],
  ["u", 554, 564, 606, 606, 823], ["d", 564, 564, 592, 604, 814], ["u", 558, 573, 592, 600, 822],
  ["d", 564, 573, 583, 591, 823], ["u", 541, 563, 582, 590, 799], ["d", 507, 563, 587, 589, 780],
  ["d", 567, 588, 590, 602, 823], ["u", 575, 584, 590, 622, 807], ["u", 564, 578, 585, 586, 818],
  ["u", 512, 516, 578, 581, 817], ["u", 466, 474, 516, 522, 817], ["d", 464, 473, 478, 491, 825],
  ["u", 345, 354, 478, 487, 789], ["u", 277, 291, 355, 395, 771], ["d", 238, 290, 297, 339, 773],
  ["d", 291, 297, 311, 380, 789], ["u", 260, 266, 309, 319, 820], ["d", 265, 265, 287, 339, 815],
  ["d", 249, 287, 326, 374, 800], ["d", 313, 325, 335, 392, 805], ["d", 309, 334, 355, 362, 829],
  ["u", 337, 344, 355, 426, 814], ["d", 328, 344, 372, 386, 832], ["u", 305, 319, 373, 380, 823],
  ["u", 258, 296, 321, 321, 827], ["d", 272, 295, 305, 316, 830], ["u", 260, 267, 305, 305, 842]
];
const months = [[80, "11月"], [214, "12月"], [347, "2024"], [514, "2月"], [647, "3月"], [781, "4月"],
  [947, "5月"], [1214, "7月"], [1380, "8月"], [1514, "9月"], [1681, "10月"]];
const TOP = 176, START = 14.4, STEP = 33.32, HALF = 13;
const plot = document.getElementById("plot");
const el = (tag, cls, attrs, text) => {
  const n = document.createElementNS("http://www.w3.org/2000/svg", tag);
  n.setAttribute("class", cls);
  for (const k in attrs) n.setAttribute(k, attrs[k]);
  if (text) n.textContent = text;
  plot.appendChild(n);
};
const line = (cls, x1, y1, x2, y2) => el("line", cls, { x1, y1, x2, y2 });

function draw() {
  plot.textContent = "";
  const w = Math.round(plot.getBoundingClientRect().width);
  for (let i = 0; i < 10; i++) {
    const y = Math.round(48 + i * 54.5) + 0.5;
    line("grid", 0, y, w + 8, y);
  }
  line("grid", 0, 570.5, w + 107, 570.5);
  line("grid", 0, 618.5, w + 8, 618.5);
  line("grid", 0, 688.5, w, 688.5);
  line("grid", 0, 695.5, w + 107, 695.5);
  months.forEach(([x, t]) => {
    line("grid", x + 0.5, 2, x + 0.5, 695);
    el("text", t === "2024" ? "month year" : "month", { x: x + 1, y: 713 }, t);
  });
  weeks.forEach(([dir, hi, top, bot, lo, vol], i) => {
    const x = Math.round(START + i * STEP);
    const up = dir === "u";
    line(up ? "up-wick" : "dn-wick", x + 0.5, hi - TOP, x + 0.5, top - TOP);
    line(up ? "up-wick" : "dn-wick", x + 0.5, bot - TOP, x + 0.5, lo - TOP);
    [[top, bot], [vol, 864]].forEach(([a, b]) => {
      if (up) el("rect", "up-body", { x: x - HALF + 0.5, y: a - TOP + 0.5, width: HALF * 2, height: b - a });
      else el("rect", "dn-body", { x: x - HALF, y: a - TOP, width: HALF * 2 + 1, height: b - a + 1 });
    });
  });
  el("path", "est", { d: "M1067.500 666V638.500h26V666" });
  line("last-line", 1, 90.5, w, 90.5);
  line("cross", 1, 120.5, w - 25, 120.5);
  line("cross", 1080.5, 2, 1080.5, 695);
  el("text", "mark", { x: 582, y: 66 }, "73794.0000");
  el("path", "mark-line", { d: "M668 62.500h9M674 59l3.500 3.500-3.500 3.500" });
  el("text", "mark", { x: 33, y: 544 }, "29898.0000");
  el("path", "mark-line", { d: "M29 540.500h-9M23 537l-3.500 3.500 3.500 3.500" });
  el("rect", "date-box", { x: 1015, y: 697, width: 132, height: 22 });
  el("text", "date-text", { x: 1081, y: 713 }, "2024-06-03 08:00");
  el("path", "pointer", { d: "M1096 121v17l4-4 3.500 7 3-1.500-3.500-6.500h5.500z", fill: "#fff", stroke: "#222" });
}
draw();
window.addEventListener("resize", draw);
```
